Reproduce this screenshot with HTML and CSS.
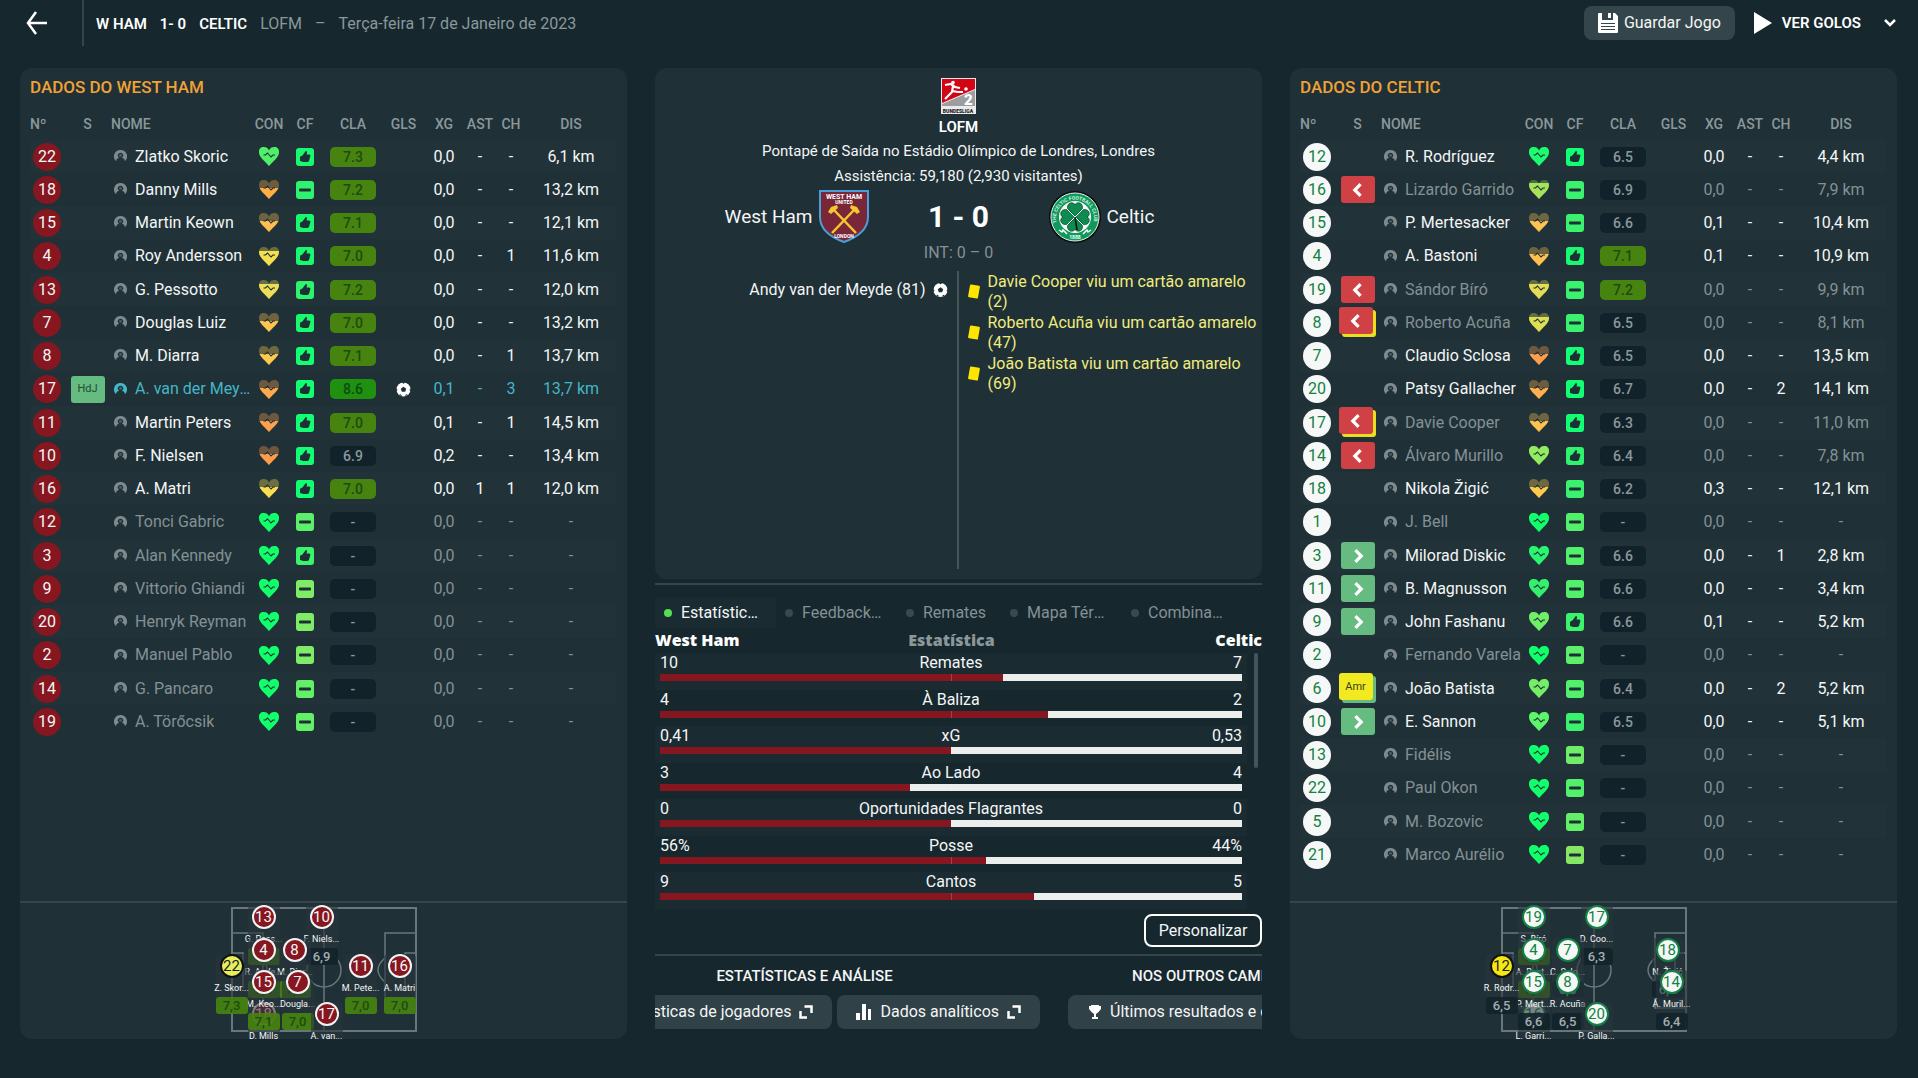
FILE: index.html
```html
<!DOCTYPE html>
<html lang="pt">
<head>
    <meta charset="UTF-8">
    <meta name="viewport" content="width=device-width, initial-scale=1.0">
    <title>West Ham 1 - 0 Celtic</title>
    <link rel="stylesheet" href="styles.css">
</head>
<body>
    <svg class="sprites" aria-hidden="true">
        <symbol id="i-person" viewBox="0 0 14 14">
            <path fill="currentColor" fill-rule="evenodd" d="M7 0a7 7 0 0 1 4.800 12.100C11.600 9.800 10 8.800 8.600 8.400a3 3 0 1 0-3.200 0C4 8.800 2.400 9.800 2.200 12.100A7 7 0 0 1 7 0z"/>
            <circle cx="7" cy="5.800" r="1.500" fill="currentColor" opacity=".5"/>
        </symbol>
        <symbol id="i-thumb" viewBox="0 0 18 18">
            <rect width="18" height="18" rx="3" fill="currentColor"/>
            <path fill="#1c3036" d="M9.800 3c1 0 1.500.8 1.200 1.700L10.500 6.500h2.400c1.300 0 1.700.8 1.400 1.800l-1.200 4.200c-.3 1-.9 1.400-1.800 1.400H7.400L4 12.900V8.700l2.400-1.100z"/>
        </symbol>
        <symbol id="i-minus" viewBox="0 0 18 18">
            <rect width="18" height="18" rx="3" fill="currentColor"/>
            <rect x="3" y="7.500" width="12" height="3" rx="1" fill="#1c3036"/>
        </symbol>
        <symbol id="i-ball" viewBox="0 0 16 16">
            <circle cx="8" cy="8" r="7.500" fill="#fff"/>
            <path fill="#1f3037" d="M8 5l2.900 2.100-1.100 3.300H6.200L5.100 7.100zM6 .5l2 1.300L10 .5 8 0zM.3 6.800l1.300 1.500L.7 10 0 8zM15.700 6.800l-1.300 1.500.9 1.700.7-2zM3.500 13l2 .2.8 2-1.800-.7zM12.500 13l-2 .2-.8 2 1.800-.7z"/>
        </symbol>
        <symbol id="i-left" viewBox="0 0 14 14">
            <path d="M9 2.500L4.500 7 9 11.500" fill="none" stroke="#fff" stroke-width="2.500"/>
        </symbol>
        <symbol id="i-right" viewBox="0 0 14 14">
            <path d="M5 2.500L9.500 7 5 11.500" fill="none" stroke="#fff" stroke-width="2.500"/>
        </symbol>
        <symbol id="i-open" viewBox="0 0 14 14">
            <path d="M5.500 1.500h7V8M1.500 6v6.500H8" fill="none" stroke="#fff" stroke-width="2.500"/>
        </symbol>
        <symbol id="i-pitch" viewBox="0 0 186 125">
            <g fill="none" stroke="#69777b" stroke-width="1.500">
                <rect x="1" y="1" width="184" height="123" stroke-width="2"/>
                <path d="M93 1v123M1 26h31v75H1M1 46h11v34H1M185 26h-31v75h31M185 46h-11v34h11M32 51q8 12 0 24M154 51q-14 12 0 24"/>
                <circle cx="93" cy="63" r="17"/>
            </g>
        </symbol>
    </svg>

    <header class="topbar">
        <a href="#" class="back" aria-label="Voltar">
            <svg width="22" height="24" viewBox="0 0 22 24"><path d="M10 1L2 12l8 11M2 12h19" fill="none" stroke="#fff" stroke-width="2.500"/></svg>
        </a>
        <div class="match">
            <strong>W HAM</strong><strong>1- 0</strong><strong>CELTIC</strong>
            <span>LOFM</span><span>–</span><span>Terça-feira 17 de Janeiro de 2023</span>
        </div>
        <button class="save">
            <svg width="20" height="20" viewBox="0 0 20 20"><path fill="#fff" d="M1 0h3v7h11V0h2l3 3v16a1 1 0 0 1-1 1H1a1 1 0 0 1-1-1V1a1 1 0 0 1 1-1zM10 0h3v5h-3z"/><path d="M3 10.500h14M3 13.500h14M3 16.500h14" stroke="#34464c"/></svg>
            Guardar Jogo
        </button>
        <button class="goals">
            <svg width="18" height="22" viewBox="0 0 18 22"><path fill="#fff" d="M0 0l18 11L0 22z"/></svg>
            VER GOLOS
            <svg class="chevron" width="12" height="8" viewBox="0 0 12 8"><path d="M1 1l5 5 5-5" fill="none" stroke="#fff" stroke-width="2.500"/></svg>
        </button>
    </header>

    <main class="board">
        <section class="panel home">
            <h2>DADOS DO WEST HAM</h2>
            <table class="players">
                <thead>
                    <tr><th class="no">Nº</th><th class="sub">S</th><th class="name">NOME</th><th class="con">CON</th><th class="con">CF</th><th class="cla">CLA</th><th class="gls">GLS</th><th class="xg">XG</th><th class="ast">AST</th><th class="ch">CH</th><th class="dis">DIS</th></tr>
                </thead>
                <tbody id="home-rows"></tbody>
            </table>
            <div class="pitch-area">
                <div class="pitch" id="home-pitch"><svg width="186" height="125"><use href="#i-pitch"/></svg></div>
            </div>
        </section>

        <section class="center">
            <div class="summary">
                <svg class="league" width="35" height="36" viewBox="0 0 35 36">
                    <rect width="35" height="36" fill="#e9eaec"/>
                    <path fill="#d20515" d="M1 1h33v10L1 25z"/>
                    <path fill="#9b9da0" d="M34 12v16H1v-2z"/>
                    <path fill="none" stroke="#fff" stroke-width="2.200" d="M4 7l6-1 4 3 5 1M12 8l-1 6-7 7M11 13l6 1 5 0"/>
                    <circle cx="12" cy="4.500" r="1.800" fill="#fff"/><circle cx="25" cy="11" r="1.800" fill="#fff"/>
                    <text x="23" y="27" class="league-no">2</text>
                    <text x="17" y="35" class="league-name" text-anchor="middle">BUNDESLIGA</text>
                </svg>
                <h3>LOFM</h3>
                <p class="venue">Pontapé de Saída no Estádio Olímpico de Londres, Londres</p>
                <p class="venue">Assistência: 59,180 (2,930 visitantes)</p>
                <div class="score">
                    <div class="side side-home">
                        <span>West Ham</span>
                        <svg width="50" height="53" viewBox="0 0 50 53">
                            <path d="M1 1h48v26c0 12-10 20-24 25C11 47 1 39 1 27z" fill="#7a2639" stroke="#4b9fd8" stroke-width="2"/>
                            <text x="25" y="9" text-anchor="middle" class="crest-text">WEST HAM</text>
                            <text x="25" y="14" text-anchor="middle" class="crest-small">UNITED</text>
                            <path d="M14 19l23 24M36 19L13 43" stroke="#f5c72e" stroke-width="2.500"/>
                            <path d="M9 22l3-5 6-2 1 3-7 6zM41 22l-3-5-6-2-1 3 7 6z" fill="#f5c72e"/>
                            <text x="25" y="48" text-anchor="middle" class="crest-small">LONDON</text>
                        </svg>
                    </div>
                    <b>1 - 0</b>
                    <div class="side">
                        <svg width="52" height="52" viewBox="0 0 52 52">
                            <circle cx="26" cy="26" r="26" fill="#0a0f10"/>
                            <circle cx="26" cy="26" r="24" fill="#0f9a5b" stroke="#e6f0ea"/>
                            <path id="ring" d="M7.500 32a19 19 0 1 1 37 0" fill="none"/>
                            <text class="ring-text"><textPath href="#ring">THE CELTIC FOOTBALL CLUB</textPath></text>
                            <circle cx="26" cy="26" r="16" fill="#f5f8f5"/>
                            <g fill="#0f8a50" stroke="#0a3d24" stroke-width=".6">
                                <g id="leaf"><path d="M26 26c-9-5-9-12-5-14 3-1 5 1 5 2 0-1 2-3 5-2 4 2 4 9-5 14z"/></g>
                                <use href="#leaf" transform="rotate(90 26 26)"/><use href="#leaf" transform="rotate(180 26 26)"/><use href="#leaf" transform="rotate(270 26 26)"/>
                            </g>
                            <path d="M15 15l22 22M37 15L15 37" stroke="#fff" stroke-width="1"/>
                            <path d="M26 26l2 13" stroke="#0a0f10" stroke-width="1.500"/>
                            <path d="M10 39l3 2 1-2 4 4M42 39l-3 2-1-2-4 4" fill="none" stroke="#fff" stroke-width="1.500"/>
                            <text x="26" y="48" text-anchor="middle" class="crest-small">1888</text>
                        </svg>
                        <span>Celtic</span>
                    </div>
                </div>
                <p class="halftime">INT: 0 – 0</p>
                <div class="events">
                    <ul class="events-home">
                        <li>Andy van der Meyde (81) <svg width="15" height="16"><use href="#i-ball"/></svg></li>
                    </ul>
                    <ul class="events-away">
                        <li><i class="card"></i><span>Davie Cooper viu um cartão amarelo (2)</span></li>
                        <li><i class="card"></i><span>Roberto Acuña viu um cartão amarelo (47)</span></li>
                        <li><i class="card"></i><span>João Batista viu um cartão amarelo (69)</span></li>
                    </ul>
                </div>
            </div>

            <nav class="tabs">
                <button class="tab active"><span>Estatísticas</span></button>
                <button class="tab"><span>Feedback do jogo</span></button>
                <button class="tab short"><span>Remates</span></button>
                <button class="tab"><span>Mapa Térmico</span></button>
                <button class="tab"><span>Combinações</span></button>
            </nav>
            <div class="stats-head"><span>West Ham</span><span>Estatística</span><span>Celtic</span></div>
            <div class="stats-wrap">
                <div class="stats" id="stats"></div>
                <div class="scroll"></div>
            </div>
            <button class="customize">Personalizar</button>

            <div class="links" id="links">
                <div class="group">
                    <h4>ESTATÍSTICAS E ANÁLISE</h4>
                    <div class="group-row">
                        <a href="#" class="link">
                            <svg width="16" height="16" viewBox="0 0 16 16"><path fill="#fff" d="M0 8h4v8H0zM6 0h4v16H6zM12 5h4v11h-4z"/></svg>
                            Estatísticas de jogadores <svg width="14" height="14"><use href="#i-open"/></svg>
                        </a>
                        <a href="#" class="link">
                            <svg width="16" height="16" viewBox="0 0 16 16"><path fill="#fff" d="M0 9h4v7H0zM6 0h4v16H6zM12 5h3v11h-3z"/></svg>
                            Dados analíticos <svg width="14" height="14"><use href="#i-open"/></svg>
                        </a>
                    </div>
                </div>
                <div class="group">
                    <h4>NOS OUTROS CAMPOS</h4>
                    <div class="group-row">
                        <a href="#" class="link">
                            <svg width="15" height="14" viewBox="0 0 15 14"><path fill="#fff" d="M4 0h8v1h2v3l-2.500 3L9 9v3h2v2H5v-2h2V9L4.500 7 2 4V1h2z"/></svg>
                            Últimos resultados e calendário
                        </a>
                    </div>
                </div>
            </div>
        </section>

        <section class="panel away">
            <h2>DADOS DO CELTIC</h2>
            <table class="players">
                <thead>
                    <tr><th class="no">Nº</th><th class="sub">S</th><th class="name">NOME</th><th class="con">CON</th><th class="con">CF</th><th class="cla">CLA</th><th class="gls">GLS</th><th class="xg">XG</th><th class="ast">AST</th><th class="ch">CH</th><th class="dis">DIS</th></tr>
                </thead>
                <tbody id="away-rows"></tbody>
            </table>
            <div class="pitch-area">
                <div class="pitch" id="away-pitch"><svg width="186" height="125"><use href="#i-pitch"/></svg></div>
            </div>
        </section>
    </main>
    <script src="script.js"></script>
</body>
</html>
```
FILE: styles.css
```css
* {
    box-sizing: border-box;
}
body {
    margin: 0;
    min-height: 100vh;
    display: flex;
    flex-direction: column;
    background-color: #16272e;
    color: #f4f6f6;
    font-family: Roboto, "Noto Sans", sans-serif;
    font-size: 16px;
    line-height: 20px;
}
h2, h3, h4, p, ul {
    margin: 0;
    padding: 0;
}
button {
    font: inherit;
    color: inherit;
    border: 0;
    background: none;
    padding: 0;
}
a {
    color: inherit;
    text-decoration: none;
}
svg {
    display: block;
    flex: none;
}
.sprites {
    position: absolute;
    width: 0;
    height: 0;
}

/* top bar */
.topbar {
    display: flex;
    align-items: center;
    height: 46px;
    margin-bottom: 22px;
    padding-right: 22px;
}
.back {
    display: flex;
    align-items: center;
    height: 46px;
    width: 84px;
    padding-left: 26px;
    border-right: 2px solid #34464c;
}
.match {
    display: flex;
    flex: 1;
    gap: 13px;
    padding-top: 2px;
    padding-left: 12px;
    color: #8b989b;
}
.match strong {
    color: #fff;
    font-size: 15px;
    font-weight: 600;
}
.save {
    display: flex;
    align-items: center;
    justify-content: center;
    gap: 6px;
    width: 151px;
    height: 34px;
    margin-right: 19px;
    border-radius: 8px;
    background-color: #34464c;
}
.goals {
    display: flex;
    align-items: center;
    gap: 10px;
    font-size: 15px;
    font-weight: 600;
    color: #fff;
}
.chevron {
    margin-left: 13px;
}

/* three columns */
.board {
    flex: 1;
    display: grid;
    grid-template-columns: repeat(3, minmax(0, 1fr));
    gap: 28px;
    padding: 0 21px 39px 20px;
}
.panel {
    display: flex;
    flex-direction: column;
    padding-top: 9px;
    border-radius: 12px;
    background-color: #1f3037;
}
.panel h2 {
    margin: 0 10px 12px;
    font-size: 17px;
    font-weight: 500;
    line-height: 20px;
    color: #f0a236;
}
.players {
    width: calc(100% - 21px);
    margin: 0 10px;
    table-layout: fixed;
    border-collapse: collapse;
    text-align: center;
}
.players th {
    height: 31px;
    padding: 0 0 2px;
    font-size: 14px;
    font-weight: 500;
    color: #8b989b;
}
.players td {
    height: 33px;
    padding: 0;
    white-space: nowrap;
}
.players tr:nth-child(4n) td {
    height: 34px;
}
.players tbody tr:nth-child(odd) td {
    background-color: #213339;
}
.players .no { width: 34px; text-align: left; }
.players .sub { width: 47px; }
.players .name { text-align: left; }
.players .con { width: 36px; }
.players .cla { width: 60px; }
.players .gls { width: 41px; }
.players .xg { width: 40px; }
.players .ast { width: 32px; }
.players .ch { width: 30px; }
.players .dis { width: 90px; }
.players td svg {
    margin: 0 auto;
}
.number {
    display: block;
    width: 28px;
    height: 28px;
    margin: 0 auto;
    border-radius: 50%;
    line-height: 28px;
}
.home .number {
    background-color: #86161f;
    color: #f4f6f6;
}
.away .number {
    background-color: #f6f8f7;
    color: #128144;
}
.tag {
    display: flex;
    align-items: center;
    justify-content: center;
    width: 34px;
    height: 27px;
    margin: 0 auto;
    border-radius: 3px;
    font-size: 11px;
}
.tag.out { background-color: #cf4145; }
.tag.in, .tag.motm { background-color: #66bb80; }
.tag.motm { color: #244a35; }
.tag.amr {
    background-color: #f1ea20;
    color: #3c3f14;
}
/* second event lies under the first one */
.tag.booked, .tag.amr {
    transform: translate(-2px, -2px);
    box-shadow: 3px 3px #eadf1f;
}
.tag.amr { box-shadow: 3px 3px #66bb80; }
.who {
    display: flex;
    align-items: center;
    gap: 8px;
    margin-right: -3px;
    padding-left: 3px;
}
.players .who svg {
    margin: 0;
    color: #7d8b8f;
}
.who span {
    overflow: hidden;
    text-overflow: ellipsis;
}
.idle {
    color: #849195;
}
.star, .players .star .who svg {
    color: #45b6c6;
}
.rating {
    display: block;
    width: 46px;
    height: 20px;
    margin: 0 auto;
    border-radius: 5px;
    background-color: #12222a;
    color: #8b989b;
    font-size: 14px;
    font-weight: 500;
}
.rating.good {
    background-color: #46840f;
    color: #1f4a12;
}
.rating.top {
    background-color: #1f900f;
    color: #0c4c12;
}

/* small pitch */
.pitch-area {
    display: flex;
    justify-content: center;
    height: 138px;
    margin-top: auto;
    padding-top: 4px;
    border-top: 2px solid #34464c;
    overflow: hidden;
}
.pitch {
    position: relative;
}
.token {
    position: absolute;
    width: 32px;
    margin: -12px 0 0 -16px;
    text-align: center;
    white-space: nowrap;
    border-radius: 4px;
    background-color: rgba(40, 54, 60, 0.6);
}
.token b {
    display: block;
    width: 24px;
    height: 24px;
    margin: 0 auto;
    border: 2px solid #f3f3f3;
    border-radius: 50%;
    background-color: #86161f;
    font-size: 15px;
    font-weight: 400;
    line-height: 20px;
}
.away .token b {
    border-color: #128144;
    background-color: #f6f8f7;
    color: #128144;
}
.token.keeper b {
    border-color: #111;
    background-color: #e5ee5c;
    color: #1c1c1c;
}
.away .token.keeper b {
    background-color: #f4e814;
}
.token span {
    display: flex;
    justify-content: center;
    height: 19px;
    font-size: 9px;
    line-height: 20px;
}
.token em {
    display: block;
    height: 17px;
    border-radius: 3px;
    background-color: rgba(18, 34, 42, 0.9);
    color: #a3adb0;
    font-size: 13px;
    font-style: normal;
    font-weight: 500;
    line-height: 17px;
}
.token em.good {
    background-color: rgba(70, 132, 15, 0.9);
    color: #1f4a12;
}

/* middle column */
.center {
    display: flex;
    flex-direction: column;
}
.summary {
    display: flex;
    flex-direction: column;
    align-items: center;
    height: 511px;
    padding: 10px 0;
    border-radius: 12px;
    background-color: #1f3037;
}
.summary h3 {
    margin: 3px 0 2px;
    font-size: 15px;
    font-weight: 600;
    color: #fff;
}
.league-no {
    fill: #fff;
    font-size: 15px;
    font-weight: 900;
}
.league-name {
    fill: #222;
    font-size: 5px;
    font-weight: 900;
}
.crest-text {
    fill: #fff;
    font-size: 7px;
    font-weight: 700;
}
.crest-small {
    fill: #fff;
    font-size: 5px;
    font-weight: 700;
}
.ring-text {
    fill: #d5efe0;
    font-size: 5px;
    font-weight: 700;
}
.venue {
    margin-top: 2px;
    margin-bottom: 3px;
    font-size: 15px;
}
.score {
    display: grid;
    grid-template-columns: 1fr 180px 1fr;
    align-items: center;
    width: 100%;
    margin-top: 1px;
    text-align: center;
}
.score b {
    font-size: 30px;
    line-height: 36px;
    color: #fff;
}
.side {
    display: flex;
    align-items: center;
    gap: 6px;
    font-size: 19px;
}
.side-home {
    justify-content: flex-end;
}
.halftime {
    margin-bottom: 8px;
    color: #849195;
}
.events {
    display: grid;
    grid-template-columns: 1fr 1fr;
    flex: 1;
    width: 100%;
}
.events ul {
    list-style: none;
}
.events li {
    display: flex;
    gap: 7px;
}
.events-home {
    padding-top: 9px;
    border-right: 2px solid #46565b;
}
.events-home li {
    align-items: center;
    justify-content: flex-end;
    padding-right: 9px;
}
.events-away li {
    align-items: center;
    height: 41px;
    padding-left: 10px;
    gap: 9px;
    color: #f0ec7d;
}
.card {
    flex: none;
    width: 10px;
    height: 13px;
    border-radius: 1px;
    background-color: #ffe600;
    transform: rotate(10deg);
}
.tabs {
    display: flex;
    margin-top: 4px;
    padding-top: 12px;
    border-top: 2px solid #34464c;
}
.tab {
    display: flex;
    align-items: center;
    gap: 9px;
    width: 121px;
    height: 31px;
    padding: 0 13px 0 9px;
    border-radius: 3px;
    color: #849195;
}
.tab::before {
    content: "";
    flex: none;
    width: 8px;
    height: 8px;
    border-radius: 50%;
    background-color: #3b494e;
}
.tab.short {
    width: 104px;
}
.tab span {
    overflow: hidden;
    text-overflow: ellipsis;
    white-space: nowrap;
}
.tab.active {
    background-color: #1a2b32;
    color: #f4f6f6;
}
.tab.active::before {
    background-color: #52e052;
}
.stats-head {
    display: grid;
    grid-template-columns: 1fr auto 1fr;
    margin-top: 2px;
    padding-bottom: 3px;
    color: #fff;
    font-family: "Open Sans", sans-serif;
    font-size: 16px;
    font-weight: 800;
}
.stats-head span:nth-child(2) {
    padding-right: 14px;
    color: #8b989b;
}
.stats-head span:last-child {
    text-align: right;
}
.stats-wrap {
    display: flex;
    justify-content: space-between;
    gap: 7px;
    padding-right: 4px;
}
.stats {
    flex: 1;
}
.stat {
    display: grid;
    grid-template-columns: 1fr auto 1fr;
    grid-template-rows: 21px 7px;
    height: 37px;
    padding: 0 5px;
}
.stat:nth-child(even) {
    height: 36px;
}
.stat:nth-child(odd) {
    background-color: #1a2b32;
}
.stat span:nth-child(3) {
    text-align: right;
}
.bar {
    position: relative;
    grid-column: 1 / 4;
    background-color: #eceeee;
}
.bar div {
    height: 7px;
    background-color: #86161f;
}
.bar::after {
    content: "";
    position: absolute;
    top: 0;
    left: 50%;
    width: 1px;
    height: 7px;
    background-color: rgba(255, 255, 255, 0.2);
}
.scroll {
    width: 4px;
    height: 115px;
    border-radius: 2px;
    background-color: #44545a;
}
.customize {
    align-self: flex-end;
    width: 118px;
    height: 33px;
    margin-top: 5px;
    border: 2px solid #fff;
    border-radius: 8px;
}
.links {
    display: flex;
    gap: 28px;
    margin-top: 7px;
    padding-top: 10px;
    border-top: 2px solid #34464c;
    overflow: hidden;
}
.group {
    flex: none;
    text-align: center;
}
.group h4 {
    margin-bottom: 9px;
    font-size: 15px;
    font-weight: 500;
}
.group-row {
    display: flex;
    gap: 5px;
}
.link {
    display: flex;
    align-items: center;
    gap: 8px;
    height: 34px;
    padding: 0 19px;
    border-radius: 8px;
    background-color: #304147;
    white-space: nowrap;
}
```
FILE: script.js
```javascript
// no, tag, name, heart colour, heart empty %, cf icon, cf colour, rating, goals, xg, ast, ch, distance, row class
var homePlayers = [
    [22, "", "Zlatko Skoric", "#4fef6a", 0, "thumb", "#19f96f", "7.3", 0, "0,0", "-", "-", "6,1 km", ""],
    [18, "", "Danny Mills", "#ffae45", 40, "minus", "#2ef36e", "7.2", 0, "0,0", "-", "-", "13,2 km", ""],
    [15, "", "Martin Keown", "#ffbe50", 40, "thumb", "#19f96f", "7.1", 0, "0,0", "-", "-", "12,1 km", ""],
    [4, "", "Roy Andersson", "#f4df4e", 20, "thumb", "#19f96f", "7.0", 0, "0,0", "-", "1", "11,6 km", ""],
    [13, "", "G. Pessotto", "#eede57", 20, "thumb", "#2ef36e", "7.2", 0, "0,0", "-", "-", "12,0 km", ""],
    [7, "", "Douglas Luiz", "#ffc350", 40, "thumb", "#19f96f", "7.0", 0, "0,0", "-", "-", "13,2 km", ""],
    [8, "", "M. Diarra", "#ffc84e", 40, "thumb", "#12ff73", "7.1", 0, "0,0", "-", "1", "13,7 km", ""],
    [17, "motm", "A. van der Meyde", "#ffa94e", 40, "thumb", "#12ff73", "8.6", 1, "0,1", "-", "3", "13,7 km", "star"],
    [11, "", "Martin Peters", "#ffa04e", 40, "thumb", "#12ff73", "7.0", 0, "0,1", "-", "1", "14,5 km", ""],
    [10, "", "F. Nielsen", "#ff9c4c", 40, "thumb", "#12ff73", "6.9", 0, "0,2", "-", "-", "13,4 km", ""],
    [16, "", "A. Matri", "#fddd50", 40, "thumb", "#12ff73", "7.0", 0, "0,0", "1", "1", "12,0 km", ""],
    [12, "", "Tonci Gabric", "#12ff6c", 0, "minus", "#5cef6a", "-", 0, "0,0", "-", "-", "-", "idle"],
    [3, "", "Alan Kennedy", "#12ff6c", 0, "thumb", "#3af56c", "-", 0, "0,0", "-", "-", "-", "idle"],
    [9, "", "Vittorio Ghiandi", "#12ff6c", 0, "minus", "#7eec66", "-", 0, "0,0", "-", "-", "-", "idle"],
    [20, "", "Henryk Reyman", "#12ff6c", 0, "minus", "#7eec66", "-", 0, "0,0", "-", "-", "-", "idle"],
    [2, "", "Manuel Pablo", "#12ff6c", 0, "minus", "#7eec66", "-", 0, "0,0", "-", "-", "-", "idle"],
    [14, "", "G. Pancaro", "#12ff6c", 0, "minus", "#64ef69", "-", 0, "0,0", "-", "-", "-", "idle"],
    [19, "", "A. Törőcsik", "#12ff6c", 0, "minus", "#64ef69", "-", 0, "0,0", "-", "-", "-", "idle"]
];
var awayPlayers = [
    [12, "", "R. Rodríguez", "#1dfb70", 0, "thumb", "#12ff73", "6.5", 0, "0,0", "-", "-", "4,4 km", ""],
    [16, "out", "Lizardo Garrido", "#a5e35a", 18, "minus", "#3af26d", "6.9", 0, "0,0", "-", "-", "7,9 km", "idle"],
    [15, "", "P. Mertesacker", "#ffc450", 40, "minus", "#3af26d", "6.6", 0, "0,1", "-", "-", "10,4 km", ""],
    [4, "", "A. Bastoni", "#ffc04e", 35, "thumb", "#19f96f", "7.1", 0, "0,1", "-", "-", "10,9 km", ""],
    [19, "out", "Sándor Bíró", "#e4dc56", 20, "minus", "#3af26d", "7.2", 0, "0,0", "-", "-", "9,9 km", "idle"],
    [8, "out booked", "Roberto Acuña", "#dfdf55", 20, "minus", "#3af26d", "6.5", 0, "0,0", "-", "-", "8,1 km", "idle"],
    [7, "", "Claudio Sclosa", "#ff9e4d", 40, "thumb", "#12ff73", "6.5", 0, "0,0", "-", "-", "13,5 km", ""],
    [20, "", "Patsy Gallacher", "#ffb04e", 40, "thumb", "#12ff73", "6.7", 0, "0,0", "-", "2", "14,1 km", ""],
    [17, "out booked", "Davie Cooper", "#ffc24e", 40, "thumb", "#12ff73", "6.3", 0, "0,0", "-", "-", "11,0 km", "idle"],
    [14, "out", "Álvaro Murillo", "#92ec60", 0, "thumb", "#2ef36e", "6.4", 0, "0,0", "-", "-", "7,8 km", "idle"],
    [18, "", "Nikola Žigić", "#ffca4c", 40, "minus", "#3af26d", "6.2", 0, "0,3", "-", "-", "12,1 km", ""],
    [1, "", "J. Bell", "#12ff6c", 0, "minus", "#52f06b", "-", 0, "0,0", "-", "-", "-", "idle"],
    [3, "in", "Milorad Diskic", "#2af571", 0, "minus", "#52f06b", "6.6", 0, "0,0", "-", "1", "2,8 km", ""],
    [11, "in", "B. Magnusson", "#35f06d", 0, "minus", "#52f06b", "6.6", 0, "0,0", "-", "-", "3,4 km", ""],
    [9, "in", "John Fashanu", "#72ef68", 0, "thumb", "#3af56c", "6.6", 0, "0,1", "-", "-", "5,2 km", ""],
    [2, "", "Fernando Varela", "#12ff6c", 0, "minus", "#5cef6a", "-", 0, "0,0", "-", "-", "-", "idle"],
    [6, "amr", "João Batista", "#75ee66", 0, "minus", "#52f06b", "6.4", 0, "0,0", "-", "2", "5,2 km", ""],
    [10, "in", "E. Sannon", "#5cf56c", 0, "minus", "#3af26d", "6.5", 0, "0,0", "-", "-", "5,1 km", ""],
    [13, "", "Fidélis", "#12ff6c", 0, "minus", "#70ed68", "-", 0, "0,0", "-", "-", "-", "idle"],
    [22, "", "Paul Okon", "#12ff6c", 0, "minus", "#52f06b", "-", 0, "0,0", "-", "-", "-", "idle"],
    [5, "", "M. Bozovic", "#12ff6c", 0, "minus", "#64ef69", "-", 0, "0,0", "-", "-", "-", "idle"],
    [21, "", "Marco Aurélio", "#12ff6c", 0, "minus", "#86e765", "-", 0, "0,0", "-", "-", "-", "idle"]
];

// no, x, y, name, rating
var homeTokens = [
    [13, 33, 10, "G. Pess...", "7,2"], [10, 91, 10, "F. Niels...", "6,9"],
    [4, 33, 43, "R. Ande...", "7,0"], [8, 64, 43, "M. Diar...", "7,1"],
    [18, 33, 107, "D. Mills", "7,2"], [15, 33, 75, "M. Keo...", "7,1"],
    [7, 67, 75, "Dougla...", "7,0"], [22, 1, 59, "Z. Skor...", "7,3"],
    [11, 130, 59, "M. Pete...", "7,0"], [16, 169, 59, "A. Matri", "7,0"],
    [17, 96, 107, "A. van...", "8,6"]
];
var awayTokens = [
    [19, 33, 10, "S. Bíró", "7,2"], [17, 96, 10, "D. Coo...", "6,3"],
    [4, 33, 43, "A. Bast...", "7,1"], [7, 67, 43, "C. Sclo...", "6,5"],
    [16, 33, 107, "L. Garri...", "6,9"], [15, 33, 75, "P. Mert...", "6,6"],
    [8, 67, 75, "R. Acuña", "6,5"], [12, 1, 59, "R. Rodr...", "6,5"],
    [18, 167, 43, "N. Žigić", "6,2"], [14, 171, 75, "Á. Muril...", "6,4"],
    [20, 96, 107, "P. Galla...", "6,7"]
];

// label, home, away, home share in %
var stats = [
    ["Remates", "10", "7", 59], ["À Baliza", "4", "2", 66.7], ["xG", "0,41", "0,53", 50],
    ["Ao Lado", "3", "4", 43], ["Oportunidades Flagrantes", "0", "0", 50],
    ["Posse", "56%", "44%", 56], ["Cantos", "9", "5", 64.3]
];

var HEART = "M10 19C6 14 0 10.500 0 5 0 1.500 2 0 4.500 0 7 0 9 1 10 3.500 11 1 13 0 15.500 0 18 0 20 1.500 20 5 20 10.500 14 14 10 19z";

function icon(id, size, color) {
    var style = color ? ' style="color:' + color + '"' : "";
    return '<svg width="' + size + '" height="' + size + '"' + style + '><use href="#i-' + id + '"/></svg>';
}
function heart(color, empty) {
    var top = Math.round(19 * empty / 100);
    return '<svg width="20" height="19" viewBox="0 0 20 19">' +
        '<path d="' + HEART + '" fill="' + color + '" opacity=".35"/>' +
        '<svg y="' + top + '" width="20" height="' + (19 - top) + '" viewBox="0 ' + top + ' 20 ' + (19 - top) + '"><path d="' + HEART + '" fill="' + color + '"/></svg>' +
        '<path d="M4.500 8h2l2-2 3.500 4 2-2h2" fill="none" stroke="#1f3037" stroke-width="1.100"/></svg>';
}
function tag(kind) {
    if (!kind) return "";
    var inner = icon("left", 18);
    if (kind == "in") inner = icon("right", 18);
    if (kind == "motm") inner = "HdJ";
    if (kind == "amr") inner = "Amr";
    return '<span class="tag ' + kind + '">' + inner + '</span>';
}
function ratingClass(r) {
    var n = parseFloat(r.replace(",", "."));
    return n >= 8 ? "top" : n >= 7 ? "good" : "";
}
function drawPlayers(id, players) {
    var html = "";
    players.forEach(function (p) {
        html += '<tr class="' + p[13] + '">' +
            '<td><span class="number">' + p[0] + '</span></td>' +
            '<td>' + tag(p[1]) + '</td>' +
            '<td><div class="who">' + icon("person", 13) + '<span>' + p[2] + '</span></div></td>' +
            '<td>' + heart(p[3], p[4]) + '</td>' +
            '<td>' + icon(p[5], 18, p[6]) + '</td>' +
            '<td><span class="rating ' + ratingClass(p[7]) + '">' + p[7] + '</span></td>' +
            '<td>' + (p[8] ? icon("ball", 15) : "") + '</td>' +
            '<td>' + p[9] + '</td><td>' + p[10] + '</td><td>' + p[11] + '</td><td>' + p[12] + '</td></tr>';
    });
    document.getElementById(id).innerHTML = html;
}
function drawTokens(id, tokens, keeper) {
    var html = "";
    tokens.forEach(function (t) {
        html += '<div class="token' + (t[0] == keeper ? " keeper" : "") + '" style="left:' + t[1] + 'px;top:' + t[2] + 'px">' +
            '<b>' + t[0] + '</b><span>' + t[3] + '</span><em class="' + ratingClass(t[4]) + '">' + t[4] + '</em></div>';
    });
    document.getElementById(id).insertAdjacentHTML("beforeend", html);
}
function drawStats() {
    var html = "";
    stats.forEach(function (s) {
        html += '<div class="stat"><span>' + s[1] + '</span><span>' + s[0] + '</span><span>' + s[2] + '</span>' +
            '<div class="bar"><div style="width:' + s[3] + '%"></div></div></div>';
    });
    document.getElementById("stats").innerHTML = html;
}

drawPlayers("home-rows", homePlayers);
drawPlayers("away-rows", awayPlayers);
drawTokens("home-pitch", homeTokens, 22);
drawTokens("away-pitch", awayTokens, 12);
drawStats();
document.getElementById("links").scrollLeft = 86;
```
